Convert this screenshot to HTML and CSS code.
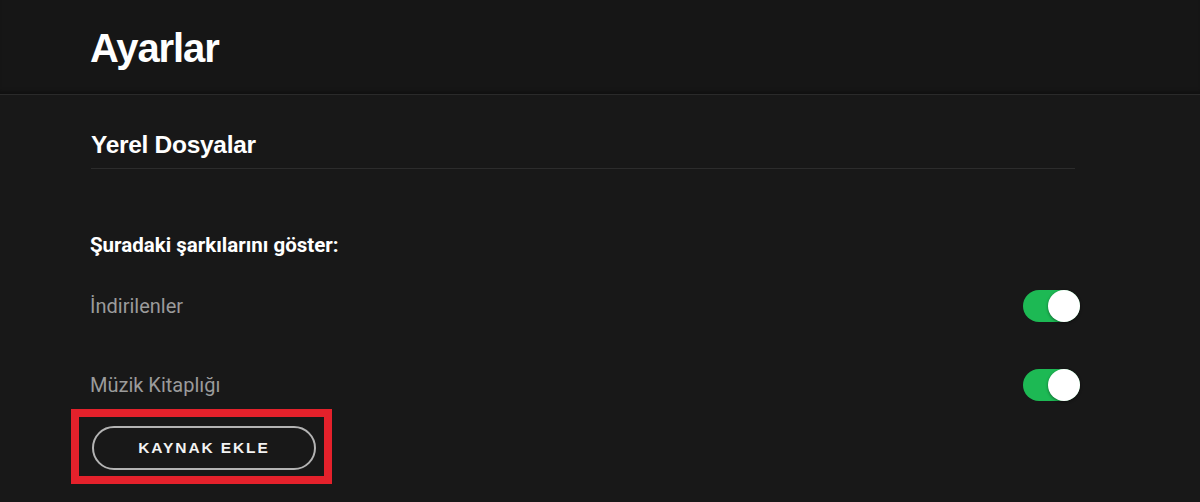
FILE: index.html
```html
<!DOCTYPE html>
<html lang="tr">
<head>
<meta charset="utf-8">
<title>Ayarlar</title>
<link rel="stylesheet" href="styles.css">
</head>
<body>
<header class="page-header">
  <h1 class="page-title">Ayarlar</h1>
</header>
<main class="content">
  <section class="section">
    <h2 class="section-title">Yerel Dosyalar</h2>
    <p class="group-label">Şuradaki şarkılarını göster:</p>
    <div class="settings-list">
      <div class="setting-row">
        <span class="setting-name">İndirilenler</span>
        <span class="toggle"><span class="knob"></span></span>
      </div>
      <div class="setting-row">
        <span class="setting-name">Müzik Kitaplığı</span>
        <span class="toggle"><span class="knob"></span></span>
      </div>
    </div>
    <div class="highlight">
      <button class="outline-btn" type="button">KAYNAK EKLE</button>
    </div>
  </section>
</main>
</body>
</html>
```

FILE: styles.css
```css
* { box-sizing: border-box; }

html, body {
  margin: 0;
  padding: 0;
  height: 100%;
}

body {
  background: #181818;
  color: #ffffff;
  font-family: "Liberation Sans", Arial, sans-serif;
  overflow: hidden;
}

.page-header {
  height: 95px;
  background: #161616;
  border-bottom: 1px solid #2a2a2a;
  box-shadow: inset 0 -5px 4px -3px rgba(0, 0, 0, 0.35);
  padding: 24px 0 0 90px;
}

.page-title {
  margin: 0;
  font-size: 40px;
  line-height: 48px;
  font-weight: 700;
  letter-spacing: -1.1px;
  color: #ffffff;
}

.content {
  padding: 0 120px 0 90px;
}

.section {
  display: flex;
  flex-direction: column;
}

.section-title {
  margin: 0 5px 0 1px;
  padding: 37px 0 10px;
  font-size: 24.5px;
  line-height: 26px;
  font-weight: 700;
  letter-spacing: -0.3px;
  color: #ffffff;
  border-bottom: 1px solid #2c2c2c;
}

.group-label {
  margin: 63px 0 0;
  font-family: Roboto, "Liberation Sans", sans-serif;
  font-size: 20.5px;
  line-height: 26px;
  font-weight: 700;
  color: #ffffff;
}

.settings-list {
  display: flex;
  flex-direction: column;
  margin-top: 8px;
}

.setting-row {
  display: flex;
  align-items: center;
  justify-content: space-between;
  height: 79px;
}

.setting-name {
  font-family: Roboto, "Liberation Sans", sans-serif;
  font-size: 20px;
  color: #9b9b9b;
}

.toggle {
  position: relative;
  width: 57px;
  height: 32px;
  border-radius: 16px;
  background: #1db954;
}

.knob {
  position: absolute;
  top: 0;
  right: 0;
  width: 32px;
  height: 32px;
  border-radius: 50%;
  background: #ffffff;
  box-shadow: 0 1px 3px rgba(0, 0, 0, 0.45);
}

.highlight {
  align-self: flex-start;
  margin: -15px 0 0 -19px;
  border: 8px solid #e4212b;
  padding: 9px 8px 6px 13px;
}

.outline-btn {
  display: block;
  width: 224px;
  height: 44px;
  border-radius: 22px;
  border: 2px solid #b3b3b3;
  background: transparent;
  color: #f2f2f2;
  font-family: "Liberation Sans", Arial, sans-serif;
  font-size: 15.5px;
  font-weight: 700;
  letter-spacing: 1.9px;
  padding: 0;
  cursor: pointer;
}
```
